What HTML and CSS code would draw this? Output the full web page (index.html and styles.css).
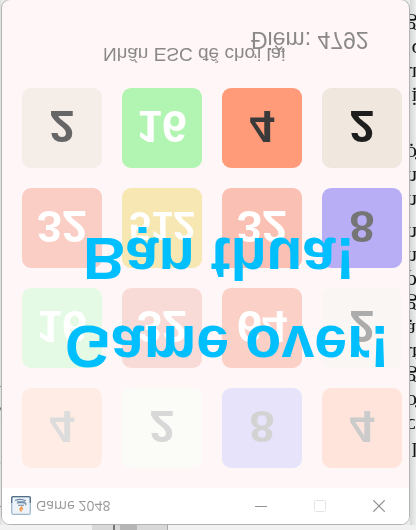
FILE: index.html
```html
<!DOCTYPE html>
<html lang="vi">
<head>
<meta charset="utf-8">
<title>Game 2048</title>
<link rel="stylesheet" href="styles.css">
</head>
<body>
<div class="scene">
  <div class="ruler"><span class="ruler-light"></span><span class="ruler-dark"></span><span class="ruler-light ruler-narrow"></span><span class="ruler-mid"></span><span class="ruler-light ruler-wide"></span></div>
  <div class="page page-left">
    <p>n<br>t<br>o<br>s<br>g<br>n<br>i</p>
  </div>
  <main class="window">
    <header class="titlebar">
      <svg class="app-icon" viewBox="0 0 20 19" aria-hidden="true">
        <rect x=".7" y=".7" width="18.6" height="17.6" rx="1.5" fill="#edf3f8" stroke="#9db9d0" stroke-width="1.3"/>
        <path d="M.7 12v5q0 1.300 1.300 1.300h16q1.300 0 1.300-1.300V12" fill="none" stroke="#526f89" stroke-width="1.300"/>
        <path d="M10.500 3.500l-1.500 2.500 2 2.500M11.800 5.500l-1 1.500" fill="none" stroke="#f09a4a" stroke-width="1.600"/>
        <path d="M7 9.800h6M6 11.700c2 .6 6 .6 8 0M4 14.500c3 1.300 8 1.200 11-.2M14 10c1.500 0 1.200 2-.5 2.500M6 13.300h8" fill="none" stroke="#6c8ba8" stroke-width="1.100"/>
      </svg>
      <h1 class="title">Game 2048</h1>
      <button class="control" type="button" aria-label="Minimize"><svg viewBox="0 0 12 12"><path d="M0 5.500h12" stroke="#929292"/></svg></button>
      <button class="control" type="button" aria-label="Maximize" disabled><svg viewBox="0 0 12 12"><rect x=".5" y=".5" width="11" height="11" rx="1" fill="none" stroke="#e5e5e5"/></svg></button>
      <button class="control" type="button" aria-label="Close"><svg viewBox="0 0 12 12"><path d="M.3.3l11.400 11.400M11.700.3L.3 11.700" stroke="#888" stroke-width="1.100"/></svg></button>
    </header>
    <section class="game">
      <div class="board">
        <div class="tile r1c1">4</div><div class="tile r1c2">2</div><div class="tile r1c3">8</div><div class="tile r1c4">4</div>
        <div class="tile r2c1">16</div><div class="tile r2c2">32</div><div class="tile r2c3">64</div><div class="tile r2c4">2</div>
        <div class="tile r3c1">32</div><div class="tile r3c2 tile-long">512</div><div class="tile r3c3">32</div><div class="tile r3c4">8</div>
        <div class="tile r4c1">2</div><div class="tile r4c2">16</div><div class="tile r4c3">4</div><div class="tile r4c4">2</div>
      </div>
      <p class="banner banner-over">Game over!</p>
      <p class="banner banner-lost">Bạn thua!</p>
      <p class="hint">Nhấn ESC để chơi lại</p>
      <p class="score">Điểm: 4792</p>
    </section>
  </main>
  <div class="page page-right">
    <p>&nbsp;l<br>c<br>ơ,<br>gệ<br>ư<br>ạ<br>g<br>ph<br>n<br>h</p>
    <p>n<br>h</p>
    <p class="apart">ợ</p>
    <p class="apart">&nbsp;ị<br>uệ<br>&nbsp;c<br>gộ</p>
  </div>
</div>
</body>
</html>
```

FILE: styles.css
```css
* {
  box-sizing: border-box;
}

body {
  margin: 0;
  background: #e9ebeb;
  font-family: "Liberation Sans", Arial, sans-serif;
}

p,
h1 {
  margin: 0;
}

/* The whole desktop is mirrored top to bottom. */
.scene {
  display: grid;
  grid-template-columns: 1px minmax(0, 1fr) 6px;
  grid-template-rows: 5px calc(100vh - 4px);
  height: 100vh;
  overflow: hidden;
  transform: scaleY(-1);
  will-change: transform;
}

.ruler {
  grid-column: 1 / -1;
  display: flex;
  padding-left: 92px;
  background: #f1f1f1;
}

.ruler-light {
  width: 21px;
  background: #d8d8d8;
}

.ruler-dark {
  width: 2px;
  background: #777;
}

.ruler-narrow {
  width: 5px;
}

.ruler-mid {
  width: 17px;
  background: #b5b5b5;
}

.ruler-wide {
  width: 31px;
  border-right: 1px solid #a8a8a8;
}

.page {
  overflow: hidden;
  white-space: nowrap;
  color: #151515;
  font-family: "Liberation Serif", "Times New Roman", serif;
  font-size: 22px;
  line-height: 24px;
}

.page-right {
  display: flex;
  flex-direction: column;
  padding-top: 63px;
  background: linear-gradient(90deg, #d6d8d8, #eceeee);
}

.page-right p {
  margin-left: -4px;
}

.page-right p + p {
  margin-top: 8px;
}

.page-right .apart {
  margin-top: 0;
}

.page-right .apart + .apart {
  margin-top: 32px;
}

.page-left {
  display: flex;
  justify-content: flex-end;
  background: #dfe1e1;
}

.window {
  display: flex;
  flex-direction: column;
  overflow: hidden;
  border: 1px solid #b2b4b4;
  border-radius: 9px;
  background: #fff6f7;
}

.titlebar {
  display: flex;
  align-items: center;
  height: 36px;
  flex: none;
  padding: 0 1px 0 9px;
  background: #fff;
}

.app-icon {
  width: 20px;
  height: 19px;
}

.title {
  flex: 1;
  margin-left: 5px;
  color: #999;
  font: 400 14px/20px "Open Sans", "Segoe UI", sans-serif;
}

.control {
  display: flex;
  align-items: center;
  justify-content: center;
  width: 59px;
  height: 36px;
  padding: 0;
  border: 0;
  background: none;
}

.control svg {
  width: 12px;
  height: 12px;
}

.game {
  position: relative;
  flex: 1;
}

.board {
  display: grid;
  grid-template-columns: repeat(4, 80px);
  grid-auto-rows: 80px;
  gap: 20px;
  padding: 20px 0 0 20px;
}

.tile {
  display: flex;
  align-items: center;
  justify-content: center;
  padding-top: 3px;
  border-radius: 9px;
  color: #fff;
  font-size: 45px;
  font-weight: 700;
  line-height: 52px;
}

.tile-long {
  font-size: 40px;
}

.r1c1 { background: #ffede5; color: #dcdcdc; }
.r1c2 { background: #fbfbf8; color: #d8d8d8; }
.r1c3 { background: #e6e3fa; color: #d3d3d3; }
.r1c4 { background: #ffe4dc; color: #cbcbcb; }
.r2c1 { background: #e5fae4; }
.r2c2 { background: #f8dbd6; }
.r2c3 { background: #fbd0c6; }
.r2c4 { background: #faf6f3; color: #acacac; }
.r3c1 { background: #facdc5; }
.r3c2 { background: #f7e7b2; }
.r3c3 { background: #fbc0b4; }
.r3c4 { background: #b8aef6; color: #757575; }
.r4c1 { background: #f5ede8; color: #666; }
.r4c2 { background: #b2f5b2; }
.r4c3 { background: #ff9b78; color: #3a3a3a; }
.r4c4 { background: #f0e8df; color: #1e1e1e; }

/* Messages drawn over the board. */
.banner,
.hint,
.score {
  position: absolute;
  white-space: nowrap;
}

.banner {
  color: #00bfff;
  font-size: 59px;
  font-weight: 700;
  line-height: 68px;
}

.banner-over {
  top: 108px;
  left: 63px;
}

.banner-lost {
  top: 196px;
  left: 81px;
}

.hint,
.score {
  color: #8a8888;
  line-height: 28px;
}

.hint {
  top: 420px;
  left: 101px;
  font-size: 19px;
}

.score {
  top: 434px;
  left: 249px;
  font-size: 23px;
}
```
